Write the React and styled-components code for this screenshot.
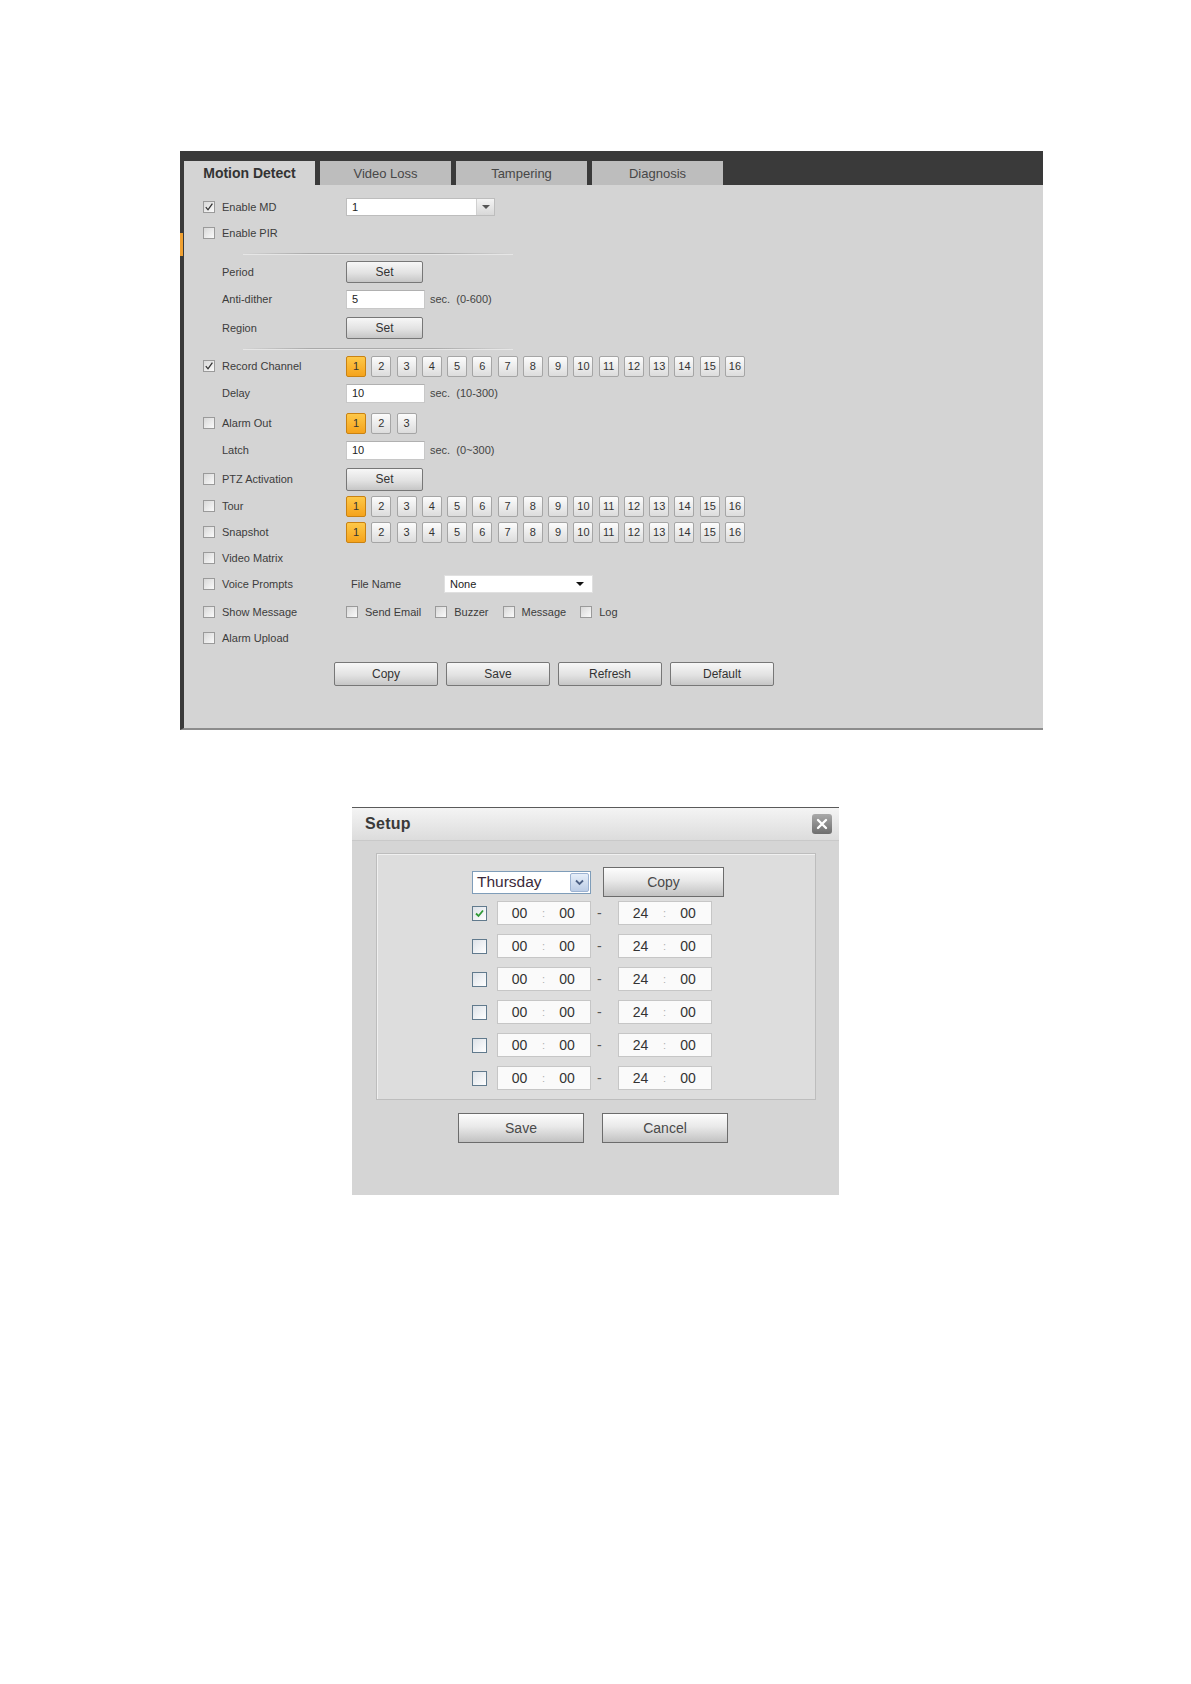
import React from "react";
import styled, { createGlobalStyle } from "styled-components";

const Global = createGlobalStyle`
  html, body { margin: 0; padding: 0; background: #ffffff; }
  body { font-family: "Liberation Sans", Arial, sans-serif; color: #333; }
`;

const Page = styled.div`
  display: flex;
  flex-direction: column;
  align-items: flex-start;
  padding: 151px 0 0 180px;
  min-height: 1684px;
  box-sizing: border-box;
`;

/* ---------- Main panel ---------- */
const Panel = styled.section`
  position: relative;
  width: 863px;
  border-left: 4px solid #3a3a3a;
  border-bottom: 2px solid #8c8c8c;
  box-sizing: border-box;
  &::before {
    content: "";
    position: absolute;
    left: -4px;
    top: 82px;
    width: 3px;
    height: 23px;
    background: #f0a030;
  }
`;

const TabBar = styled.div`
  display: flex;
  gap: 5px;
  align-items: flex-end;
  height: 34px;
  padding-top: 10px;
  box-sizing: border-box;
  background: #3a3a3a;
`;

const Tab = styled.div`
  width: 131px;
  height: 24px;
  display: flex;
  align-items: center;
  justify-content: center;
  font-size: ${(p) => (p.$active ? "14px" : "13px")};
  font-weight: ${(p) => (p.$active ? "bold" : "normal")};
  color: ${(p) => (p.$active ? "#333" : "#474747")};
  background: ${(p) => (p.$active ? "#d4d4d4" : "#bdbdbd")};
`;

const Content = styled.div`
  height: 543px;
  box-sizing: border-box;
  padding: 9px 0 0 19px;
  background: #d4d4d4;
`;

const Row = styled.div`
  display: flex;
  align-items: center;
  height: ${(p) => p.$h}px;
`;

const LabelCell = styled.div`
  width: 143px;
  flex-shrink: 0;
  display: flex;
  align-items: center;
  padding-left: ${(p) => (p.$indent ? "19px" : "0")};
  box-sizing: border-box;
`;

const Label = styled.span`
  font-size: 11px;
  color: #3c3c3c;
  white-space: nowrap;
`;

const Box = styled.span`
  width: 12px;
  height: 12px;
  box-sizing: border-box;
  border: 1px solid #9a9a9a;
  background: linear-gradient(135deg, #d8d8d8, #fafafa);
  margin-right: 7px;
  flex-shrink: 0;
  display: flex;
  align-items: center;
  justify-content: center;
`;

const Check = ({ on }) => (
  <Box>
    {on && (
      <svg width="10" height="10" viewBox="0 0 10 10">
        <path d="M1.8 5.2 L4 7.8 L8.4 1.6" fill="none" stroke="#333" strokeWidth="1.3" />
      </svg>
    )}
  </Box>
);

const Controls = styled.div`
  display: flex;
  align-items: center;
`;

const Button = styled.div`
  width: ${(p) => p.$w}px;
  height: ${(p) => p.$h}px;
  box-sizing: border-box;
  border: 1px solid #777;
  border-radius: 2px;
  background: linear-gradient(#f7f7f7, #e2e2e2 55%, #c6c6c6);
  display: flex;
  align-items: center;
  justify-content: center;
  font-size: 12px;
  color: #333;
`;

const TextBox = styled.div`
  width: 79px;
  height: 19px;
  box-sizing: border-box;
  background: #fff;
  border: 1px solid #c8c8c8;
  border-top-color: #b0b0b0;
  padding-left: 5px;
  display: flex;
  align-items: center;
  font-size: 11px;
  color: #222;
`;

const Hint = styled.span`
  margin-left: 5px;
  font-size: 11px;
  color: #444;
  white-space: pre;
`;

const Select = styled.div`
  width: 149px;
  height: 18px;
  box-sizing: border-box;
  background: #fff;
  border: 1px solid ${(p) => (p.$plain ? "#e0e0e0" : "#bdbdbd")};
  display: flex;
  align-items: center;
  justify-content: space-between;
  font-size: 11px;
  color: #222;
  padding-left: 5px;
`;

const Arrow = styled.span`
  width: ${(p) => (p.$plain ? "16px" : "17px")};
  height: 100%;
  display: flex;
  align-items: center;
  justify-content: center;
  background: ${(p) => (p.$plain ? "transparent" : "linear-gradient(#f4f4f4, #d8d8d8)")};
  border-left: ${(p) => (p.$plain ? "none" : "1px solid #d0d0d0")};
  margin-right: ${(p) => (p.$plain ? "4px" : "0")};
  &::after {
    content: "";
    border-left: 4px solid transparent;
    border-right: 4px solid transparent;
    border-top: 4px solid ${(p) => (p.$plain ? "#111" : "#555")};
  }
`;

const Channels = styled.div`
  display: flex;
  gap: 5.27px;
`;

const Chan = styled.div`
  width: 20px;
  height: 21px;
  box-sizing: border-box;
  border: 1px solid ${(p) => (p.$on ? "#c98212" : "#a5a5a5")};
  border-radius: 2px;
  background: ${(p) =>
    p.$on ? "linear-gradient(#fdc848, #f5a31c)" : "linear-gradient(#fcfcfc, #dcdcdc)"};
  display: flex;
  align-items: center;
  justify-content: center;
  font-size: 11px;
  color: #333;
`;

const Sep = styled.div`
  height: ${(p) => p.$h}px;
  display: flex;
  align-items: center;
  padding-left: 40px;
`;

const SepLine = styled.div`
  width: 270px;
  height: 1px;
  background: linear-gradient(90deg, rgba(160,160,160,0), #a9a9a9 25%, #a9a9a9 70%, rgba(160,160,160,0));
  box-shadow: 0 1px 0 #e6e6e6;
`;

const FileLabel = styled.span`
  width: 93px;
  padding-left: 5px;
  font-size: 11px;
  color: #3c3c3c;
`;

const InlineCheck = styled.div`
  display: flex;
  align-items: center;
  margin-right: 14px;
`;

const ActionRow = styled.div`
  display: flex;
  gap: 8px;
  margin: 11px 0 0 131px;
`;

const ChannelSet = ({ n }) => (
  <Channels>
    {Array.from({ length: n }, (_, i) => (
      <Chan key={i} $on={i === 0}>{i + 1}</Chan>
    ))}
  </Channels>
);

/* ---------- Setup dialog ---------- */
const Dialog = styled.section`
  width: 487px;
  height: 388px;
  margin: 77px 0 0 172px;
  box-sizing: border-box;
  background: #d5d5d5;
  border-top: 1px solid #5a5a5a;
  display: flex;
  flex-direction: column;
`;

const TitleBar = styled.div`
  height: 33px;
  box-sizing: border-box;
  display: flex;
  align-items: center;
  justify-content: space-between;
  padding: 0 7px 0 13px;
  background: linear-gradient(#f4f4f4, #dcdcdc);
  border-bottom: 1px solid #c9c9c9;
`;

const Title = styled.span`
  font-size: 16px;
  font-weight: bold;
  color: #3a3a3a;
  letter-spacing: 0.3px;
`;

const Close = styled.div`
  width: 20px;
  height: 20px;
  border-radius: 3px;
  background: linear-gradient(#a9a9a9, #6e6e6e);
  display: flex;
  align-items: center;
  justify-content: center;
`;

const Inner = styled.div`
  margin: 12px 23px 0 24px;
  height: 247px;
  box-sizing: border-box;
  border: 1px solid #bdbdbd;
  box-shadow: inset 1px 1px 0 #f0f0f0;
  background: #dddddd;
  padding: 13px 0 0 95px;
  display: flex;
  flex-direction: column;
  gap: 9px;
`;

const TopLine = styled.div`
  display: flex;
  align-items: center;
  gap: 12px;
  height: 30px;
  margin-bottom: -5px;
`;

const DaySelect = styled.div`
  width: 119px;
  height: 23px;
  box-sizing: border-box;
  border: 1px solid #7f9db9;
  background: #fff;
  display: flex;
  align-items: center;
  justify-content: space-between;
  padding: 0 1px 0 4px;
  font-size: 15.5px;
  color: #3b2a3b;
`;

const DayArrow = styled.span`
  width: 19px;
  height: 19px;
  box-sizing: border-box;
  border: 1px solid #9db3d2;
  border-radius: 2px;
  background: linear-gradient(#e6eef9, #bccde6);
  display: flex;
  align-items: center;
  justify-content: center;
`;

const DlgButton = styled.div`
  width: ${(p) => p.$w}px;
  height: 30px;
  box-sizing: border-box;
  border: 1px solid #6c6c6c;
  background: linear-gradient(#fdfdfd, #e9e9e9 45%, #c2c2c2);
  display: flex;
  align-items: center;
  justify-content: center;
  font-size: 14px;
  color: #4a4a4a;
`;

const TimeRow = styled.div`
  display: flex;
  align-items: center;
  height: 24px;
`;

const DlgBox = styled.span`
  width: 15px;
  height: 15px;
  box-sizing: border-box;
  border: 1px solid #617a8d;
  background: linear-gradient(135deg, #dde2e8, #ffffff);
  margin-right: 10px;
  display: flex;
  align-items: center;
  justify-content: center;
`;

const TimeBox = styled.div`
  width: 94px;
  height: 24px;
  box-sizing: border-box;
  border: 1px solid #c6c6c6;
  background: #fafafa;
  display: grid;
  grid-template-columns: 43px 5px 42px;
  align-items: center;
  font-size: 14px;
  color: #333;
`;

const Cell = styled.span`
  text-align: center;
`;

const Colon = styled.span`
  text-align: center;
  font-size: 11px;
  color: #b0b0b0;
`;

const Dash = styled.span`
  width: 27px;
  box-sizing: border-box;
  padding-left: 6px;
  font-size: 14px;
  color: #555;
`;

const DlgActions = styled.div`
  display: flex;
  gap: 18px;
  margin-top: 13px;
  padding-left: 106px;
`;

const Time = ({ h, m }) => (
  <TimeBox>
    <Cell>{h}</Cell>
    <Colon>:</Colon>
    <Cell>{m}</Cell>
  </TimeBox>
);

const rows = [true, false, false, false, false, false];

export default function App() {
  return (
    <>
      <Global />
      <Page>
        <Panel>
          <TabBar>
            <Tab $active>Motion Detect</Tab>
            <Tab>Video Loss</Tab>
            <Tab>Tampering</Tab>
            <Tab>Diagnosis</Tab>
          </TabBar>
          <Content>
            <Row $h={26}>
              <LabelCell><Check on /><Label>Enable MD</Label></LabelCell>
              <Select><span>1</span><Arrow /></Select>
            </Row>
            <Row $h={26}>
              <LabelCell><Check /><Label>Enable PIR</Label></LabelCell>
            </Row>
            <Sep $h={14}><SepLine /></Sep>
            <Row $h={24}>
              <LabelCell $indent><Label>Period</Label></LabelCell>
              <Button $w={77} $h={22}>Set</Button>
            </Row>
            <Row $h={30}>
              <LabelCell $indent><Label>Anti-dither</Label></LabelCell>
              <Controls><TextBox>5</TextBox><Hint>{"sec.  (0-600)"}</Hint></Controls>
            </Row>
            <Row $h={27}>
              <LabelCell $indent><Label>Region</Label></LabelCell>
              <Button $w={77} $h={22}>Set</Button>
            </Row>
            <Sep $h={14}><SepLine /></Sep>
            <Row $h={22}>
              <LabelCell><Check on /><Label>Record Channel</Label></LabelCell>
              <ChannelSet n={16} />
            </Row>
            <Row $h={32}>
              <LabelCell $indent><Label>Delay</Label></LabelCell>
              <Controls><TextBox>10</TextBox><Hint>{"sec.  (10-300)"}</Hint></Controls>
            </Row>
            <Row $h={28}>
              <LabelCell><Check /><Label>Alarm Out</Label></LabelCell>
              <ChannelSet n={3} />
            </Row>
            <Row $h={26}>
              <LabelCell $indent><Label>Latch</Label></LabelCell>
              <Controls><TextBox>10</TextBox><Hint>{"sec.  (0~300)"}</Hint></Controls>
            </Row>
            <Row $h={32}>
              <LabelCell><Check /><Label>PTZ Activation</Label></LabelCell>
              <Button $w={77} $h={23}>Set</Button>
            </Row>
            <Row $h={22}>
              <LabelCell><Check /><Label>Tour</Label></LabelCell>
              <ChannelSet n={16} />
            </Row>
            <Row $h={30}>
              <LabelCell><Check /><Label>Snapshot</Label></LabelCell>
              <ChannelSet n={16} />
            </Row>
            <Row $h={22}>
              <LabelCell><Check /><Label>Video Matrix</Label></LabelCell>
            </Row>
            <Row $h={30}>
              <LabelCell><Check /><Label>Voice Prompts</Label></LabelCell>
              <Controls>
                <FileLabel>File Name</FileLabel>
                <Select $plain><span>None</span><Arrow $plain /></Select>
              </Controls>
            </Row>
            <Row $h={26}>
              <LabelCell><Check /><Label>Show Message</Label></LabelCell>
              <Controls>
                <InlineCheck><Check /><Label>Send Email</Label></InlineCheck>
                <InlineCheck><Check /><Label>Buzzer</Label></InlineCheck>
                <InlineCheck><Check /><Label>Message</Label></InlineCheck>
                <InlineCheck><Check /><Label>Log</Label></InlineCheck>
              </Controls>
            </Row>
            <Row $h={26}>
              <LabelCell><Check /><Label>Alarm Upload</Label></LabelCell>
            </Row>
            <ActionRow>
              <Button $w={104} $h={24}>Copy</Button>
              <Button $w={104} $h={24}>Save</Button>
              <Button $w={104} $h={24}>Refresh</Button>
              <Button $w={104} $h={24}>Default</Button>
            </ActionRow>
          </Content>
        </Panel>

        <Dialog>
          <TitleBar>
            <Title>Setup</Title>
            <Close>
              <svg width="12" height="12" viewBox="0 0 12 12">
                <path d="M2 2 L10 10 M10 2 L2 10" stroke="#fff" strokeWidth="2.4" strokeLinecap="round" />
              </svg>
            </Close>
          </TitleBar>
          <Inner>
            <TopLine>
              <DaySelect>
                <span>Thursday</span>
                <DayArrow>
                  <svg width="9" height="7" viewBox="0 0 9 7">
                    <path d="M1 1.5 L4.5 5 L8 1.5" fill="none" stroke="#4d6185" strokeWidth="1.8" />
                  </svg>
                </DayArrow>
              </DaySelect>
              <DlgButton $w={121}>Copy</DlgButton>
            </TopLine>
            {rows.map((on, i) => (
              <TimeRow key={i}>
                <DlgBox>
                  {on && (
                    <svg width="11" height="11" viewBox="0 0 11 11">
                      <path d="M2 5.5 L4.5 8 L9 2.5" fill="none" stroke="#2f9a36" strokeWidth="1.8" />
                    </svg>
                  )}
                </DlgBox>
                <Time h="00" m="00" />
                <Dash>-</Dash>
                <Time h="24" m="00" />
              </TimeRow>
            ))}
          </Inner>
          <DlgActions>
            <DlgButton $w={126}>Save</DlgButton>
            <DlgButton $w={126}>Cancel</DlgButton>
          </DlgActions>
        </Dialog>
      </Page>
    </>
  );
}
